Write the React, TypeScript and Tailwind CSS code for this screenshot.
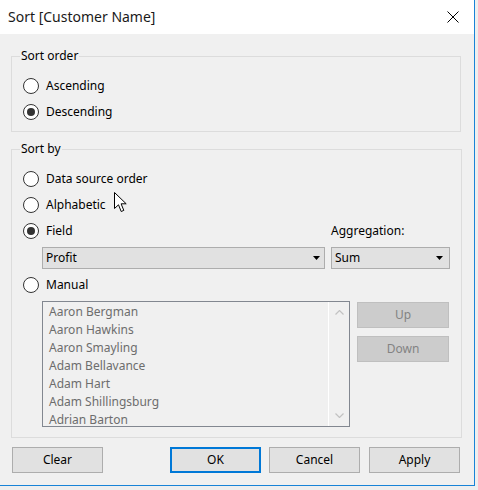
import React from "react";

const FONT = { fontFamily: '"Noto Sans", "Open Sans", sans-serif' };

function Radio({ label, checked = false }: { label: string; checked?: boolean }) {
  return (
    <div className="h-[26px] flex items-center">
      <div className="w-[16px] h-[16px] rounded-full border border-[#333333] bg-white flex items-center justify-center shrink-0">
        {checked && <div className="w-[8px] h-[8px] rounded-full bg-[#333333]" />}
      </div>
      <span className="ml-[7px] text-[12px] leading-[16px] text-black">{label}</span>
    </div>
  );
}

function Dropdown({ value, width, pr }: { value: string; width: string; pr: string }) {
  return (
    <div className={`${width} ${pr} h-[22px] border border-[#adadad] bg-[#e1e1e1] flex items-center justify-between pl-[3px]`}>
      <span className="text-[12px] leading-[16px] text-black">{value}</span>
      <svg width="7" height="4" viewBox="0 0 7 4">
        <path d="M0 0 L7 0 L3.5 4 Z" fill="#000" />
      </svg>
    </div>
  );
}

const names = [
  "Aaron Bergman",
  "Aaron Hawkins",
  "Aaron Smayling",
  "Adam Bellavance",
  "Adam Hart",
  "Adam Shillingsburg",
  "Adrian Barton",
];

export default function App() {
  return (
    <div className="w-[478px] h-[490px] bg-[#eeeeee] relative overflow-hidden" style={FONT}>
      <div className="w-[475px] h-[486px] border-r border-b border-[#1883d7] bg-[#f0f0f0] flex flex-col">
        <div className="h-[34px] bg-white flex items-center justify-between pl-[8px] pr-[15px] shrink-0">
          <span className="text-[14px] leading-[20px] text-[#1a1a1a]">Sort [Customer Name]</span>
          <svg width="12" height="12" viewBox="0 0 12 12">
            <path d="M0.5 0.5 L11.5 11.5 M11.5 0.5 L0.5 11.5" stroke="#000" strokeWidth="1" />
          </svg>
        </div>
        <div className="flex flex-col">
          <fieldset className="ml-[11px] w-[450px] mt-[14px] border border-[#dcdcdc] px-[11px] pt-[9px] pb-[6px]">
            <legend className="-ml-[3px] px-[1px] text-[12px] leading-[16px] text-black">Sort order</legend>
            <Radio label="Ascending" />
            <Radio label="Descending" checked />
          </fieldset>

          <fieldset className="ml-[11px] w-[450px] mt-[9px] border border-[#dcdcdc] px-[11px] pt-[9px] pb-[10px]">
            <legend className="-ml-[3px] px-[1px] text-[12px] leading-[16px] text-black">Sort by</legend>
            <Radio label="Data source order" />
            <Radio label="Alphabetic" />
            <div className="flex items-center">
              <div className="w-[308px]">
                <Radio label="Field" checked />
              </div>
              <span className="text-[12px] leading-[16px] text-black">Aggregation:</span>
            </div>
            <div className="flex mt-[3px] ml-[19px]">
              <Dropdown value="Profit" width="w-[283px]" pr="pr-[4px]" />
              <div className="ml-[6px]">
                <Dropdown value="Sum" width="w-[119px]" pr="pr-[6px]" />
              </div>
            </div>
            <div className="mt-[3px]">
              <Radio label="Manual" />
            </div>
            <div className="flex mt-[3px] ml-[19px]">
              <div className="w-[308px] h-[126px] border border-[#828790] flex overflow-hidden">
                <div className="flex-1 pl-[6px] pt-[1px]">
                  {names.map((n) => (
                    <div key={n} className="h-[18px] text-[12px] leading-[18px] text-[#6d6d6d] whitespace-nowrap">
                      {n}
                    </div>
                  ))}
                </div>
                <div className="w-[21px] border-l border-white flex flex-col items-center justify-between pt-[8px] pb-[8px]">
                  <svg width="9" height="5" viewBox="0 0 9 5">
                    <path d="M0.5 4.5 L4.5 0.5 L8.5 4.5" stroke="#c2c2c2" strokeWidth="1.2" fill="none" />
                  </svg>
                  <svg width="9" height="5" viewBox="0 0 9 5">
                    <path d="M0.5 0.5 L4.5 4.5 L8.5 0.5" stroke="#c2c2c2" strokeWidth="1.2" fill="none" />
                  </svg>
                </div>
              </div>
              <div className="ml-[7px] flex flex-col">
                <div className="mt-[1px] w-[92px] h-[26px] border border-[#bfbfbf] bg-[#cccccc] flex items-center justify-center text-[12px] leading-[16px] text-[#838383]">
                  Up
                </div>
                <div className="mt-[8px] w-[92px] h-[26px] border border-[#bfbfbf] bg-[#cccccc] flex items-center justify-center text-[12px] leading-[16px] text-[#838383]">
                  Down
                </div>
              </div>
            </div>
          </fieldset>

          <div className="flex mt-[9px]">
            <div className="ml-[12px] w-[91px] h-[26px] border border-[#adadad] bg-[#e1e1e1] flex items-center justify-center text-[12px] leading-[16px] text-black">
              Clear
            </div>
            <div className="ml-[67px] w-[91px] h-[26px] border-2 border-[#0078d7] bg-[#e1e1e1] flex items-center justify-center text-[12px] leading-[16px] text-black">
              OK
            </div>
            <div className="ml-[8px] w-[91px] h-[26px] border border-[#adadad] bg-[#e1e1e1] flex items-center justify-center text-[12px] leading-[16px] text-black">
              Cancel
            </div>
            <div className="ml-[9px] w-[91px] h-[26px] border border-[#adadad] bg-[#e1e1e1] flex items-center justify-center text-[12px] leading-[16px] text-black">
              Apply
            </div>
          </div>
        </div>
      </div>
      <svg className="absolute left-[114px] top-[192px]" width="13" height="21" viewBox="0 0 13 21">
        <path
          d="M0.5 0.5 L0.5 16.5 L4.5 12.8 L7.2 19.5 L9.8 18.4 L7.1 11.8 L12.2 11.8 Z"
          fill="#fff"
          stroke="#000"
          strokeWidth="1"
          strokeLinejoin="round"
        />
      </svg>
    </div>
  );
}
